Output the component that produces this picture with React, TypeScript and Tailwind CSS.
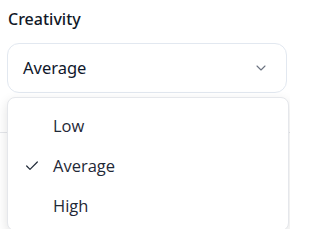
import { Check, ChevronDown } from 'lucide-react';

const options = ['Low', 'Average', 'High'];

export default function App() {
  const selected = 'Average';

  return (
    <div className="relative h-[229px] w-[290px] overflow-hidden bg-white font-['Noto_Sans',sans-serif] text-[#111827]">
      <div className="px-[7px] pt-[8px]">
        <label className="block pl-[1px] text-[16px] font-medium leading-[22px] text-[#111827]">Creativity</label>
        <button className="mt-[13px] flex h-[50px] w-[280px] items-center justify-between rounded-[12px] border border-[#e2e8f0] bg-white pl-[15px] pr-[17px] text-[16.5px] text-[#0f172a]">
          <span>{selected}</span>
          <ChevronDown className="h-[16px] w-[16px] text-[#6b7280]" strokeWidth={1.6} />
        </button>
      </div>
      <div className="mt-[39px] border-t border-[#e5e7eb]" />

      <div className="absolute left-[7px] top-[97px] w-[282px] rounded-[8px] border border-[#e5e7eb] bg-white pt-[8px] pb-[4px] shadow-[0_4px_12px_rgba(0,0,0,0.12)] font-['Open_Sans',sans-serif]">
        {options.map((o) => (
          <div key={o} className="flex h-[40px] items-center text-[16.5px] text-[#1f2937]">
            <span className="flex w-[45px] pl-[16px]">
              {o === selected && <Check className="h-[16px] w-[16px]" strokeWidth={1.8} />}
            </span>
            <span>{o}</span>
          </div>
        ))}
      </div>
    </div>
  );
}
